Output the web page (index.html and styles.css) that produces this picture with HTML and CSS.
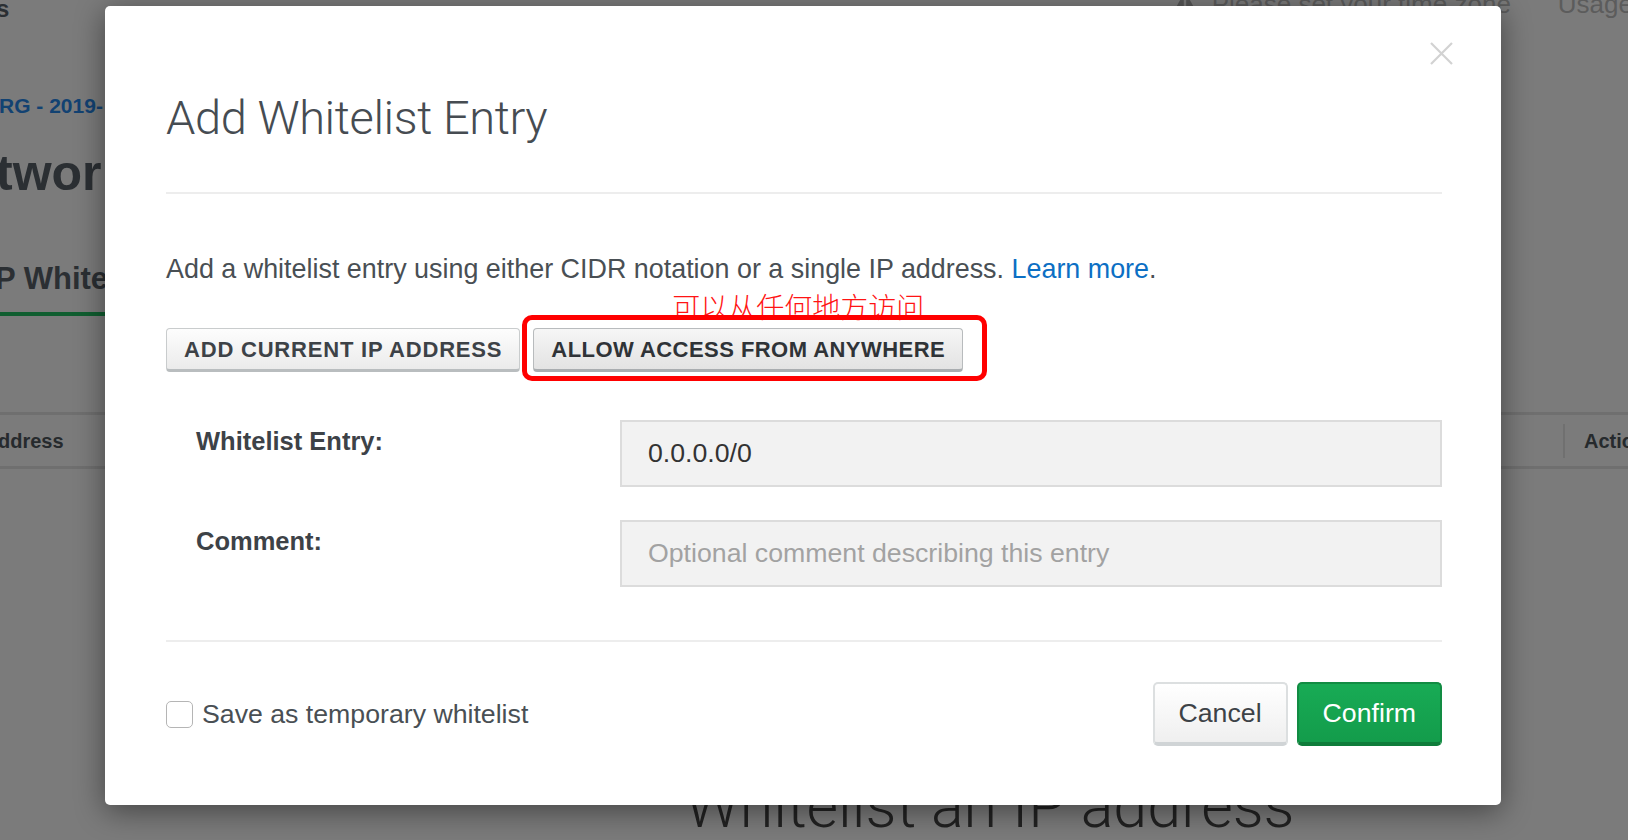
FILE: index.html
```html
<!DOCTYPE html>
<html lang="en">
<head>
<meta charset="utf-8">
<title>Add Whitelist Entry</title>
<link rel="stylesheet" href="styles.css">
</head>
<body>
<div class="page">
  <div class="topbar">
    <span class="crop-s">s</span>
    <div class="tz">
      <svg class="warn" width="24" height="22" viewBox="0 0 24 22"><path d="M12 0 L24 22 H0 Z" fill="#565656"/><path d="M12 8 V15 M12 17.5 V19.5" stroke="#7b7b7b" stroke-width="2.4"/></svg>
      <span class="tz-text">Please set your time zone</span>
      <span class="usage">Usage</span>
    </div>
  </div>
  <div class="crumb">RG - 2019-</div>
  <div class="page-title">twor</div>
  <div class="tabs"><span class="tab">P Whitel</span></div>
  <div class="thead">
    <span class="th th-first">ddress</span>
    <span class="th th-last"><span class="th-sep"></span><span>Actions</span></span>
  </div>
  <div class="empty-title">Whitelist an IP address</div>
</div>

<div class="modal" role="dialog">
  <div class="modal-header">
    <h2 class="modal-title">Add Whitelist Entry</h2>
    <button class="close" aria-label="Close">
      <svg width="23" height="23" viewBox="0 0 23 23"><path d="M1 1 L22 22 M22 1 L1 22" stroke="#d2d2d2" stroke-width="2.2"/></svg>
    </button>
  </div>
  <div class="modal-body">
    <p class="desc">Add a whitelist entry using either CIDR notation or a single IP address. <a class="link" href="#">Learn more</a>.</p>
    <div class="btn-row">
      <button class="btn-grey">ADD CURRENT IP ADDRESS</button>
      <div class="highlight">
        <button class="btn-grey btn-active">ALLOW ACCESS FROM ANYWHERE</button>
        <span class="note">可以从任何地方访问</span>
      </div>
    </div>
    <div class="form">
      <label class="form-label">Whitelist Entry:</label>
      <div class="input">0.0.0.0/0</div>
      <label class="form-label">Comment:</label>
      <div class="input placeholder">Optional comment describing this entry</div>
    </div>
  </div>
  <div class="modal-footer">
    <label class="check"><span class="box"></span><span>Save as temporary whitelist</span></label>
    <div class="actions">
      <button class="btn-cancel">Cancel</button>
      <button class="btn-confirm">Confirm</button>
    </div>
  </div>
</div>
</body>
</html>
```
FILE: styles.css
```css
* { box-sizing: border-box; }
html, body { margin: 0; padding: 0; }
body {
  width: 1628px;
  height: 840px;
  overflow: hidden;
  background: #7b7b7b;
  font-family: "Liberation Sans", Arial, sans-serif;
  position: relative;
}
.page {
  height: 840px;
  overflow: hidden;
  color: #2b2f33;
}
.topbar {
  display: flex;
  align-items: flex-start;
  height: 20px;
}
.crop-s {
  font-weight: bold;
  font-size: 24px;
  line-height: 24px;
  margin: -3px 0 0 -4px;
}
.tz {
  margin-left: auto;
  display: flex;
  align-items: flex-start;
  color: #5c5c5c;
  font-size: 26px;
  line-height: 26px;
  margin-top: -9px;
  margin-right: -5px;
}
.warn { margin-right: 15px; }
.usage { margin-left: 47px; }
.crumb {
  margin-top: 74px;
  margin-left: -1px;
  font-weight: bold;
  font-size: 21px;
  line-height: 24px;
  color: #124272;
}
.page-title {
  margin-top: 30px;
  margin-left: -4px;
  font-weight: bold;
  font-size: 50px;
  line-height: 50px;
}
.tabs { margin-top: 66px; }
.tab {
  display: inline-block;
  margin-left: -5px;
  font-weight: bold;
  font-size: 31px;
  line-height: 30px;
  padding: 0 20px 18px 0;
  border-bottom: 4px solid #105e30;
  width: 150px;
  white-space: nowrap;
}
.thead {
  margin-top: 96px;
  display: grid;
  grid-template-columns: 1563px auto;
  border-top: 3px solid #6f6f6f;
  border-bottom: 3px solid #6f6f6f;
  height: 57px;
  font-weight: bold;
  font-size: 20px;
  line-height: 20px;
  color: #262a2d;
}
.th-first { margin-left: -2px; padding-top: 16px; }
.th-last {
  display: flex;
  align-items: center;
  white-space: nowrap;
  height: 51px;
}
.th-sep {
  width: 2px;
  height: 34px;
  margin-right: 19px;
  background: #707070;
}
.empty-title {
  margin-top: 307px;
  margin-left: 685px;
  font-family: Roboto, "Liberation Sans", sans-serif;
  font-weight: 300;
  font-size: 61px;
  line-height: 61px;
  color: #222;
  white-space: nowrap;
}

/* modal */
.modal {
  position: absolute;
  left: 105px;
  top: 6px;
  width: 1396px;
  height: 799px;
  background: #fff;
  border-radius: 5px;
  box-shadow: 0 6px 30px rgba(0,0,0,0.45);
  padding: 0 59px 0 61px;
  color: #494f54;
}
.modal-header {
  display: flex;
  justify-content: space-between;
  align-items: flex-start;
  padding-top: 36px;
  padding-bottom: 46px;
  border-bottom: 2px solid #ededed;
}
.modal-title {
  margin: 48px 0 0 0;
  font-family: Roboto, "Liberation Sans", sans-serif;
  font-weight: 300;
  font-size: 47px;
  line-height: 56px;
  color: #464c52;
  letter-spacing: -0.4px;
}
.close {
  margin: 0 -11px 0 0;
  padding: 0;
  border: 0;
  background: none;
  width: 23px;
  height: 23px;
  display: block;
}
.close svg { display: block; }
.desc {
  margin: 57px 0 0 0;
  font-size: 26.9px;
  line-height: 1.4;
  color: #494f54;
}
.link { color: #0c6fc4; text-decoration: none; }
.btn-row {
  display: flex;
  gap: 13px;
  margin-top: 39.5px;
}
.btn-grey {
  height: 44px;
  padding: 2px 17px 0;
  border: 1px solid #c9cccd;
  border-bottom: 3px solid #b9bdbf;
  border-radius: 4px;
  background: linear-gradient(#fdfdfd, #ebebeb);
  font-family: "Liberation Sans", Arial, sans-serif;
  font-weight: bold;
  font-size: 22px;
  letter-spacing: 0.8px;
  color: #3d4247;
}
.btn-active {
  background: linear-gradient(#f6f6f6, #e3e3e3);
  border-color: #b8bbbd;
  border-bottom-color: #a9adb0;
  color: #2f3337;
  letter-spacing: 0.45px;
}
.highlight { position: relative; }
.highlight::after {
  content: "";
  position: absolute;
  top: -13px;
  left: -11px;
  right: -24px;
  bottom: -9px;
  border: 5px solid #ff0000;
  border-radius: 10px;
  pointer-events: none;
}
.note {
  position: absolute;
  left: 139px;
  top: -36px;
  font-family: "Noto Sans CJK SC", sans-serif;
  font-weight: 300;
  font-size: 28px;
  line-height: 28px;
  color: #ff1414;
  white-space: nowrap;
}
.form {
  margin-top: 48px;
  padding-left: 30px;
  display: grid;
  grid-template-columns: 424px 1fr;
  row-gap: 33px;
}
.form-label {
  padding-top: 6px;
  font-weight: bold;
  font-size: 25.5px;
  line-height: 30px;
  color: #3d4247;
}
.input {
  height: 67px;
  border: 2px solid #dcdcdc;
  background: #f2f2f2;
  padding: 0 26px;
  display: flex;
  align-items: center;
  font-size: 26.7px;
  color: #333;
}
.input.placeholder { color: #a2a2a2; }
.modal-footer {
  margin-top: 53px;
  border-top: 2px solid #ededed;
  padding-top: 40px;
  display: flex;
  align-items: center;
  justify-content: space-between;
}
.check {
  display: flex;
  align-items: center;
  font-size: 26.7px;
  color: #494f54;
}
.box {
  width: 27px;
  height: 27px;
  border: 1.5px solid #b5b5b5;
  border-radius: 5px;
  background: #fff;
  margin-right: 9px;
}
.actions { display: flex; gap: 9px; }
.btn-cancel, .btn-confirm {
  height: 64px;
  padding: 0 24px;
  border-radius: 5px;
  font-family: "Liberation Sans", Arial, sans-serif;
  font-size: 26.7px;
}
.btn-cancel {
  border: 2px solid #dcdfe0;
  border-bottom: 4px solid #d0d4d6;
  background: linear-gradient(#ffffff, #efefef);
  color: #3d4247;
}
.btn-confirm {
  border: 2px solid #128c43;
  border-bottom: 4px solid #0f7c3a;
  background: linear-gradient(#18ab55, #139c4b);
  color: #fff;
}
```
